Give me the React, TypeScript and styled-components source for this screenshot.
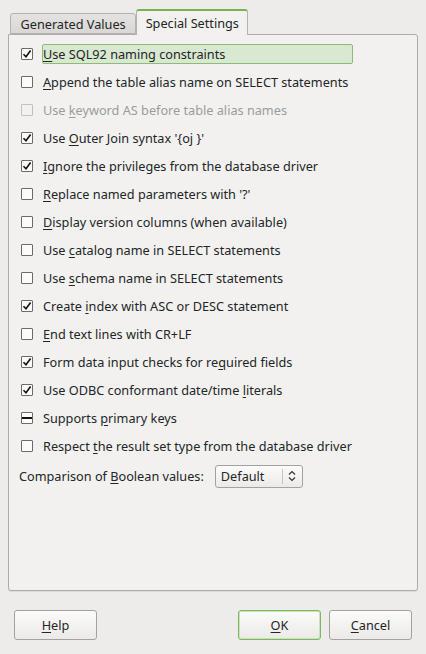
import React from "react";
import styled, { createGlobalStyle } from "styled-components";

const Global = createGlobalStyle`
  html, body { margin: 0; padding: 0; }
  body {
    background: #edecea;
    font-family: "Noto Sans", "Open Sans", sans-serif;
    font-size: 12.7px;
    color: #232627;
  }
`;

const Dialog = styled.div`
  width: 426px;
  height: 654px;
  box-sizing: border-box;
  padding: 9px 8px 0 8px;
  display: flex;
  flex-direction: column;
`;

const TabBar = styled.div`
  display: flex;
  align-items: flex-end;
  padding-left: 2px;
  height: 25px;
  position: relative;
  z-index: 1;
`;

const Tab = styled.div<{ $active?: boolean }>`
  box-sizing: border-box;
  height: ${(p) => (p.$active ? "26px" : "21px")};
  padding: 0 ${(p) => (p.$active ? "8.5px" : "9.5px")};
  margin-bottom: ${(p) => (p.$active ? "-1px" : "0")};
  display: flex;
  align-items: center;
  border: 1px solid #b3b2b0;
  border-bottom: ${(p) => (p.$active ? "none" : "1px solid #b3b2b0")};
  border-top: ${(p) => (p.$active ? "2px solid #76b356" : "1px solid #b3b2b0")};
  border-radius: 3px 3px 0 0;
  background: ${(p) => (p.$active ? "#f2f1f0" : "linear-gradient(#e4e3e1, #d8d7d5)")};
  color: #232627;
  white-space: nowrap;
  padding-top: ${(p) => (p.$active ? "0" : "1px")};
`;

const Panel = styled.div`
  box-sizing: border-box;
  height: 557px;
  border: 1px solid #adacaa;
  border-radius: 0 3px 3px 3px;
  background: #f2f1f0;
  padding: 5px 0 0 10px;
  display: flex;
  flex-direction: column;
  box-shadow: 0 1px 0 #dcdbd9;
`;

const Row = styled.div<{ $disabled?: boolean }>`
  height: 28px;
  display: flex;
  align-items: center;
  color: ${(p) => (p.$disabled ? "#9a9c9d" : "#232627")};
`;

const Box = styled.span<{ $disabled?: boolean }>`
  box-sizing: border-box;
  width: 12px;
  height: 12px;
  margin-left: 2px;
  border: 1px solid ${(p) => (p.$disabled ? "#c2c1c0" : "#6b6b6b")};
  border-radius: 1px;
  background: ${(p) => (p.$disabled ? "#f2f1f0" : "#fbfbfb")};
  display: flex;
  align-items: center;
  justify-content: center;
  flex: none;
`;

const Label = styled.span<{ $focus?: boolean }>`
  margin-left: ${(p) => (p.$focus ? "9px" : "10px")};
  box-sizing: border-box;
  height: 20px;
  line-height: 18px;
  display: block;
  white-space: pre;
  ${(p) =>
    p.$focus
      ? `width: 311px; padding-left: 0px; background: #d9e8d0; border: 1px solid #8dbb78; border-radius: 2px;`
      : `padding-top: 1px;`}
`;

const U = styled.span`
  text-decoration: underline;
  text-underline-offset: 2px;
`;

const ComboRow = styled.div`
  height: 24px;
  margin-top: 4px;
  display: flex;
  align-items: center;
`;

const ComboLabel = styled.span`
  margin-right: 11px;
  white-space: pre;
`;

const Combo = styled.div`
  box-sizing: border-box;
  width: 88px;
  height: 23px;
  border: 1px solid #a3a2a0;
  border-radius: 3px;
  background: linear-gradient(#fbfbfa, #eceae8);
  display: flex;
  align-items: center;
`;

const ComboText = styled.span`
  flex: 1;
  padding-left: 5px;
`;

const ComboSep = styled.span`
  width: 1px;
  height: 15px;
  background: #c4c3c1;
`;

const ComboArrow = styled.span`
  width: 19px;
  display: flex;
  justify-content: center;
  align-items: center;
`;

const Footer = styled.div`
  display: flex;
  align-items: center;
  padding: 19px 6px 0 6px;
  gap: 8px;
`;

const Spacer = styled.div`
  flex: 1;
`;

const Button = styled.div<{ $default?: boolean }>`
  box-sizing: border-box;
  width: 83px;
  height: 30px;
  border: 1px solid ${(p) => (p.$default ? "#7cb85d" : "#a3a2a0")};
  border-radius: 3px;
  background: linear-gradient(#fbfbfa, #ebeae8);
  display: flex;
  align-items: center;
  justify-content: center;
  color: #232627;
  white-space: pre;
  ${(p) => (p.$default ? "box-shadow: inset 0 0 0 1px #c9e2bc;" : "")}
`;

type State = "on" | "off" | "tri";

const Check = ({ state, disabled }: { state: State; disabled?: boolean }) => (
  <Box $disabled={disabled}>
    {state === "on" && (
      <svg width="10" height="10" viewBox="0 0 10 10">
        <path d="M1.5 5.2 L4 7.8 L8.6 1.6" fill="none" stroke="#111" strokeWidth="1.6" />
      </svg>
    )}
    {state === "tri" && (
      <svg width="10" height="10" viewBox="0 0 10 10">
        <rect x="0" y="4" width="10" height="2" fill="#111" />
      </svg>
    )}
  </Box>
);

type Item = { pre: string; u: string; post: string; state: State; disabled?: boolean; focus?: boolean };

const items: Item[] = [
  { pre: "", u: "U", post: "se SQL92 naming constraints", state: "on", focus: true },
  { pre: "", u: "A", post: "ppend the table alias name on SELECT statements", state: "off" },
  { pre: "Use ", u: "k", post: "eyword AS before table alias names", state: "off", disabled: true },
  { pre: "Use ", u: "O", post: "uter Join syntax '{oj }'", state: "on" },
  { pre: "", u: "I", post: "gnore the privileges from the database driver", state: "on" },
  { pre: "", u: "R", post: "eplace named parameters with '?'", state: "off" },
  { pre: "", u: "D", post: "isplay version columns (when available)", state: "off" },
  { pre: "Use ", u: "c", post: "atalog name in SELECT statements", state: "off" },
  { pre: "Use ", u: "s", post: "chema name in SELECT statements", state: "off" },
  { pre: "Create ", u: "i", post: "ndex with ASC or DESC statement", state: "on" },
  { pre: "", u: "E", post: "nd text lines with CR+LF", state: "off" },
  { pre: "Form data input checks for re", u: "q", post: "uired fields", state: "on" },
  { pre: "Use ODBC conformant date/time ", u: "l", post: "iterals", state: "on" },
  { pre: "Supports ", u: "p", post: "rimary keys", state: "tri" },
  { pre: "Respect ", u: "t", post: "he result set type from the database driver", state: "off" },
];

export default function App() {
  return (
    <>
      <Global />
      <Dialog>
        <TabBar>
          <Tab>Generated Values</Tab>
          <Tab $active>Special Settings</Tab>
        </TabBar>
        <Panel>
          {items.map((it, i) => (
            <Row key={i} $disabled={it.disabled}>
              <Check state={it.state} disabled={it.disabled} />
              <Label $focus={it.focus}>
                {it.pre}
                <U>{it.u}</U>
                {it.post}
              </Label>
            </Row>
          ))}
          <ComboRow>
            <ComboLabel>
              Comparison of <U>B</U>oolean values:
            </ComboLabel>
            <Combo>
              <ComboText>Default</ComboText>
              <ComboSep />
              <ComboArrow>
                <svg width="8" height="12" viewBox="0 0 8 12">
                  <path d="M1 4.5 L4 1.5 L7 4.5 M1 7.5 L4 10.5 L7 7.5" fill="none" stroke="#333" strokeWidth="1.2" />
                </svg>
              </ComboArrow>
            </Combo>
          </ComboRow>
        </Panel>
        <Footer>
          <Button>
            <span>
              <U>H</U>elp
            </span>
          </Button>
          <Spacer />
          <Button $default>
            <span>
              <U>O</U>K
            </span>
          </Button>
          <Button>
            <span>
              <U>C</U>ancel
            </span>
          </Button>
        </Footer>
      </Dialog>
    </>
  );
}
